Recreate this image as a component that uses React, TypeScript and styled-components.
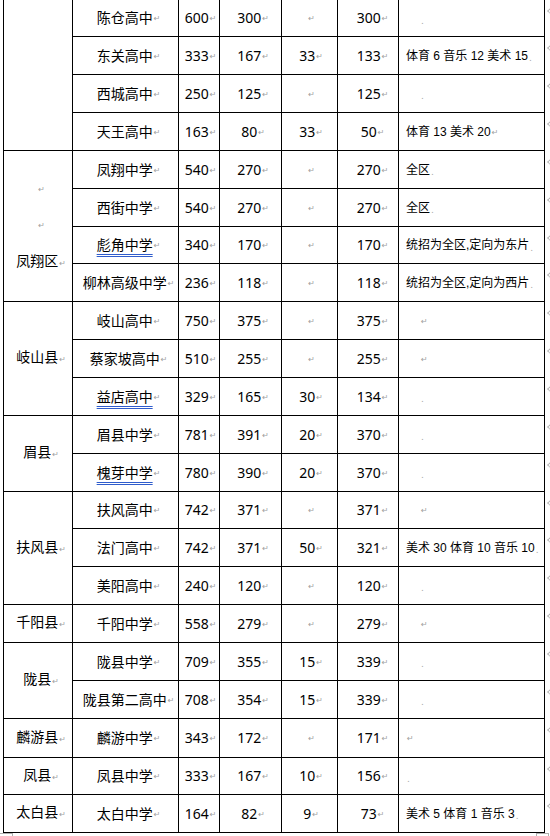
import React from 'react';
import styled, { createGlobalStyle } from 'styled-components';

const GlobalStyle = createGlobalStyle`
  html, body {
    margin: 0;
    padding: 0;
    background: #ffffff;
    overflow: hidden;
  }
  body {
    font-family: "Noto Sans", "Noto Sans CJK SC", sans-serif;
    color: #000;
  }
`;

// row boundaries read off the page: first row is cut at the top,
// every later row has a 1px rule above it
const rowHeights = [36, 37, 37, 37, 37, 37, 36, 37, 37, 37, 37, 37, 37, 36, 37, 37, 37, 37, 37, 38, 36, 37];
const rowTemplate = rowHeights.map((h) => `${h}px`).join(' ');

const Page = styled.div`
  width: 550px;
  height: 836px;
  display: flex;
  flex-direction: column;
  overflow: hidden;
`;

const Sheet = styled.div`
  display: flex;
  flex-direction: row;
  align-items: flex-start;
  padding-left: 3px;
`;

const Grid = styled.div`
  display: grid;
  grid-template-columns: 68px 105px 40px 61px 55px 60px 145px;
  grid-template-rows: ${rowTemplate};
  gap: 1px;
  padding: 0 1px 1px 1px;
  background: #000;
  font-family: "Noto Sans", "Noto Sans CJK SC", sans-serif;
  font-size: 14px;
  line-height: 1;
`;

const Cell = styled.div<{ $align?: 'left' | 'center'; $pad?: number }>`
  background: #fff;
  display: flex;
  align-items: center;
  justify-content: ${(p) => (p.$align === 'left' ? 'flex-start' : 'center')};
  padding-left: ${(p) => p.$pad ?? 0}px;
  white-space: nowrap;
  overflow: hidden;
`;

const DistrictCell = styled.div<{ $span: number }>`
  grid-row: span ${(p) => p.$span};
  background: #fff;
  display: flex;
  flex-direction: column;
  align-items: center;
  justify-content: center;
  padding-left: 6px;
  line-height: 36px;
  white-space: nowrap;
`;

const EdgeColumn = styled.div`
  display: grid;
  grid-template-rows: ${rowTemplate};
  row-gap: 1px;
  width: 5px;
  overflow: hidden;
`;

const EdgeSlot = styled.div`
  padding: 9px 0 0 3px;
`;

const EdgeMark = styled.span`
  display: block;
  width: 3px;
  height: 3px;
  border-left: 1px solid #b8b8b8;
  border-bottom: 1px solid #b8b8b8;
  transform: rotate(45deg);
`;

const Mark = styled.span<{ $gap?: number }>`
  font-family: "DejaVu Sans", sans-serif;
  font-size: 8px;
  color: #a0a0a0;
  margin-left: ${(p) => p.$gap ?? 1}px;
  transform: translateY(1px);
`;

const Dot = styled.span<{ $gap?: number }>`
  font-family: "DejaVu Sans", sans-serif;
  font-size: 9px;
  color: #a8a8a8;
  margin-left: ${(p) => p.$gap ?? 1}px;
  transform: translateY(3px);
`;

const School = styled.span<{ $marked?: boolean }>`
  text-decoration: ${(p) => (p.$marked ? 'underline double #2f5ccc' : 'none')};
  text-decoration-thickness: 1px;
  text-underline-offset: 4px;
`;

const Note = styled.span`
  font-family: "Liberation Sans", "Noto Sans CJK SC", sans-serif;
  font-size: 12px;
`;

const Footer = styled.div`
  display: flex;
  justify-content: space-between;
  height: 3px;
`;

const CornerLeft = styled.div`
  width: 12px;
  height: 3px;
  border-top: 1px solid #b0b0b0;
  border-right: 1px solid #b0b0b0;
`;

const CornerRight = styled.div`
  width: 11px;
  height: 4px;
  margin-right: 1px;
  border: 1px solid #b0b0b0;
  border-bottom: none;
`;

type End = 'ret' | 'dot';

interface Row {
  school: string;
  total: string;
  half: string;
  special: string;
  rest: string;
  note?: string;
  end: End;
  endPad?: number;
  marked?: boolean;
}

interface Group {
  name?: string;
  blanks?: number;
  rows: Row[];
}

const groups: Group[] = [
  {
    rows: [
      { school: '陈仓高中', total: '600', half: '300', special: '', rest: '300', end: 'dot', endPad: 22 },
      { school: '东关高中', total: '333', half: '167', special: '33', rest: '133', note: '体育 6 音乐 12 美术 15', end: 'dot' },
      { school: '西城高中', total: '250', half: '125', special: '', rest: '125', end: 'dot', endPad: 22 },
      { school: '天王高中', total: '163', half: '80', special: '33', rest: '50', note: '体育 13 美术 20', end: 'ret' },
    ],
  },
  {
    name: '凤翔区',
    blanks: 2,
    rows: [
      { school: '凤翔中学', total: '540', half: '270', special: '', rest: '270', note: '全区', end: 'dot' },
      { school: '西街中学', total: '540', half: '270', special: '', rest: '270', note: '全区', end: 'dot' },
      { school: '彪角中学', total: '340', half: '170', special: '', rest: '170', note: '统招为全区,定向为东片', end: 'dot', marked: true },
      { school: '柳林高级中学', total: '236', half: '118', special: '', rest: '118', note: '统招为全区,定向为西片', end: 'dot' },
    ],
  },
  {
    name: '岐山县',
    rows: [
      { school: '岐山高中', total: '750', half: '375', special: '', rest: '375', end: 'ret', endPad: 22 },
      { school: '蔡家坡高中', total: '510', half: '255', special: '', rest: '255', end: 'ret', endPad: 22 },
      { school: '益店高中', total: '329', half: '165', special: '30', rest: '134', end: 'dot', endPad: 22, marked: true },
    ],
  },
  {
    name: '眉县',
    rows: [
      { school: '眉县中学', total: '781', half: '391', special: '20', rest: '370', end: 'dot', endPad: 22 },
      { school: '槐芽中学', total: '780', half: '390', special: '20', rest: '370', end: 'dot', endPad: 22, marked: true },
    ],
  },
  {
    name: '扶风县',
    rows: [
      { school: '扶风高中', total: '742', half: '371', special: '', rest: '371', end: 'ret', endPad: 22 },
      { school: '法门高中', total: '742', half: '371', special: '50', rest: '321', note: '美术 30  体育 10 音乐 10', end: 'dot' },
      { school: '美阳高中', total: '240', half: '120', special: '', rest: '120', end: 'dot', endPad: 22 },
    ],
  },
  {
    name: '千阳县',
    rows: [{ school: '千阳中学', total: '558', half: '279', special: '', rest: '279', end: 'ret', endPad: 22 }],
  },
  {
    name: '陇县',
    rows: [
      { school: '陇县中学', total: '709', half: '355', special: '15', rest: '339', end: 'dot', endPad: 22 },
      { school: '陇县第二高中', total: '708', half: '354', special: '15', rest: '339', end: 'dot', endPad: 22 },
    ],
  },
  {
    name: '麟游县',
    rows: [{ school: '麟游中学', total: '343', half: '172', special: '', rest: '171', end: 'ret', endPad: 8 }],
  },
  {
    name: '凤县',
    rows: [{ school: '凤县中学', total: '333', half: '167', special: '10', rest: '156', end: 'dot', endPad: 8 }],
  },
  {
    name: '太白县',
    rows: [{ school: '太白中学', total: '164', half: '82', special: '9', rest: '73', note: '美术 5 体育 1 音乐 3', end: 'dot' }],
  },
];

const Ret = () => <Mark>↵</Mark>;

const NoteCell: React.FC<{ row: Row }> = ({ row }) => (
  <Cell $align="left" $pad={row.note ? 7 : 0}>
    {row.note && <Note>{row.note}</Note>}
    {row.end === 'ret' ? (
      <Mark $gap={row.note ? 1 : row.endPad}>↵</Mark>
    ) : (
      <Dot $gap={row.note ? 1 : row.endPad}>.</Dot>
    )}
  </Cell>
);

const App: React.FC = () => {
  const cells: React.ReactNode[] = [];

  groups.forEach((group, g) => {
    cells.push(
      <DistrictCell key={`d-${g}`} $span={group.rows.length}>
        {Array.from({ length: group.blanks ?? 0 }).map((_, k) => (
          <Ret key={k} />
        ))}
        {group.name && (
          <span>
            {group.name}
            <Ret />
          </span>
        )}
      </DistrictCell>
    );
    group.rows.forEach((row, i) => {
      const k = `${g}-${i}`;
      cells.push(
        <Cell key={`s-${k}`} $pad={6}>
          <School $marked={row.marked}>{row.school}</School>
          <Ret />
        </Cell>,
        <Cell key={`t-${k}`} $pad={3}>
          {row.total}
          <Ret />
        </Cell>,
        <Cell key={`h-${k}`} $pad={5}>
          {row.half}
          <Ret />
        </Cell>,
        <Cell key={`p-${k}`} $pad={3}>
          {row.special}
          <Ret />
        </Cell>,
        <Cell key={`r-${k}`} $pad={9}>
          {row.rest}
          <Ret />
        </Cell>,
        <NoteCell key={`n-${k}`} row={row} />
      );
    });
  });

  return (
    <>
      <GlobalStyle />
      <Page>
        <Sheet>
          <Grid>{cells}</Grid>
          <EdgeColumn>
            {rowHeights.map((_, i) => (
              <EdgeSlot key={i}>
                <EdgeMark />
              </EdgeSlot>
            ))}
          </EdgeColumn>
        </Sheet>
        <Footer>
          <CornerLeft />
          <CornerRight />
        </Footer>
      </Page>
    </>
  );
};

export default App;
